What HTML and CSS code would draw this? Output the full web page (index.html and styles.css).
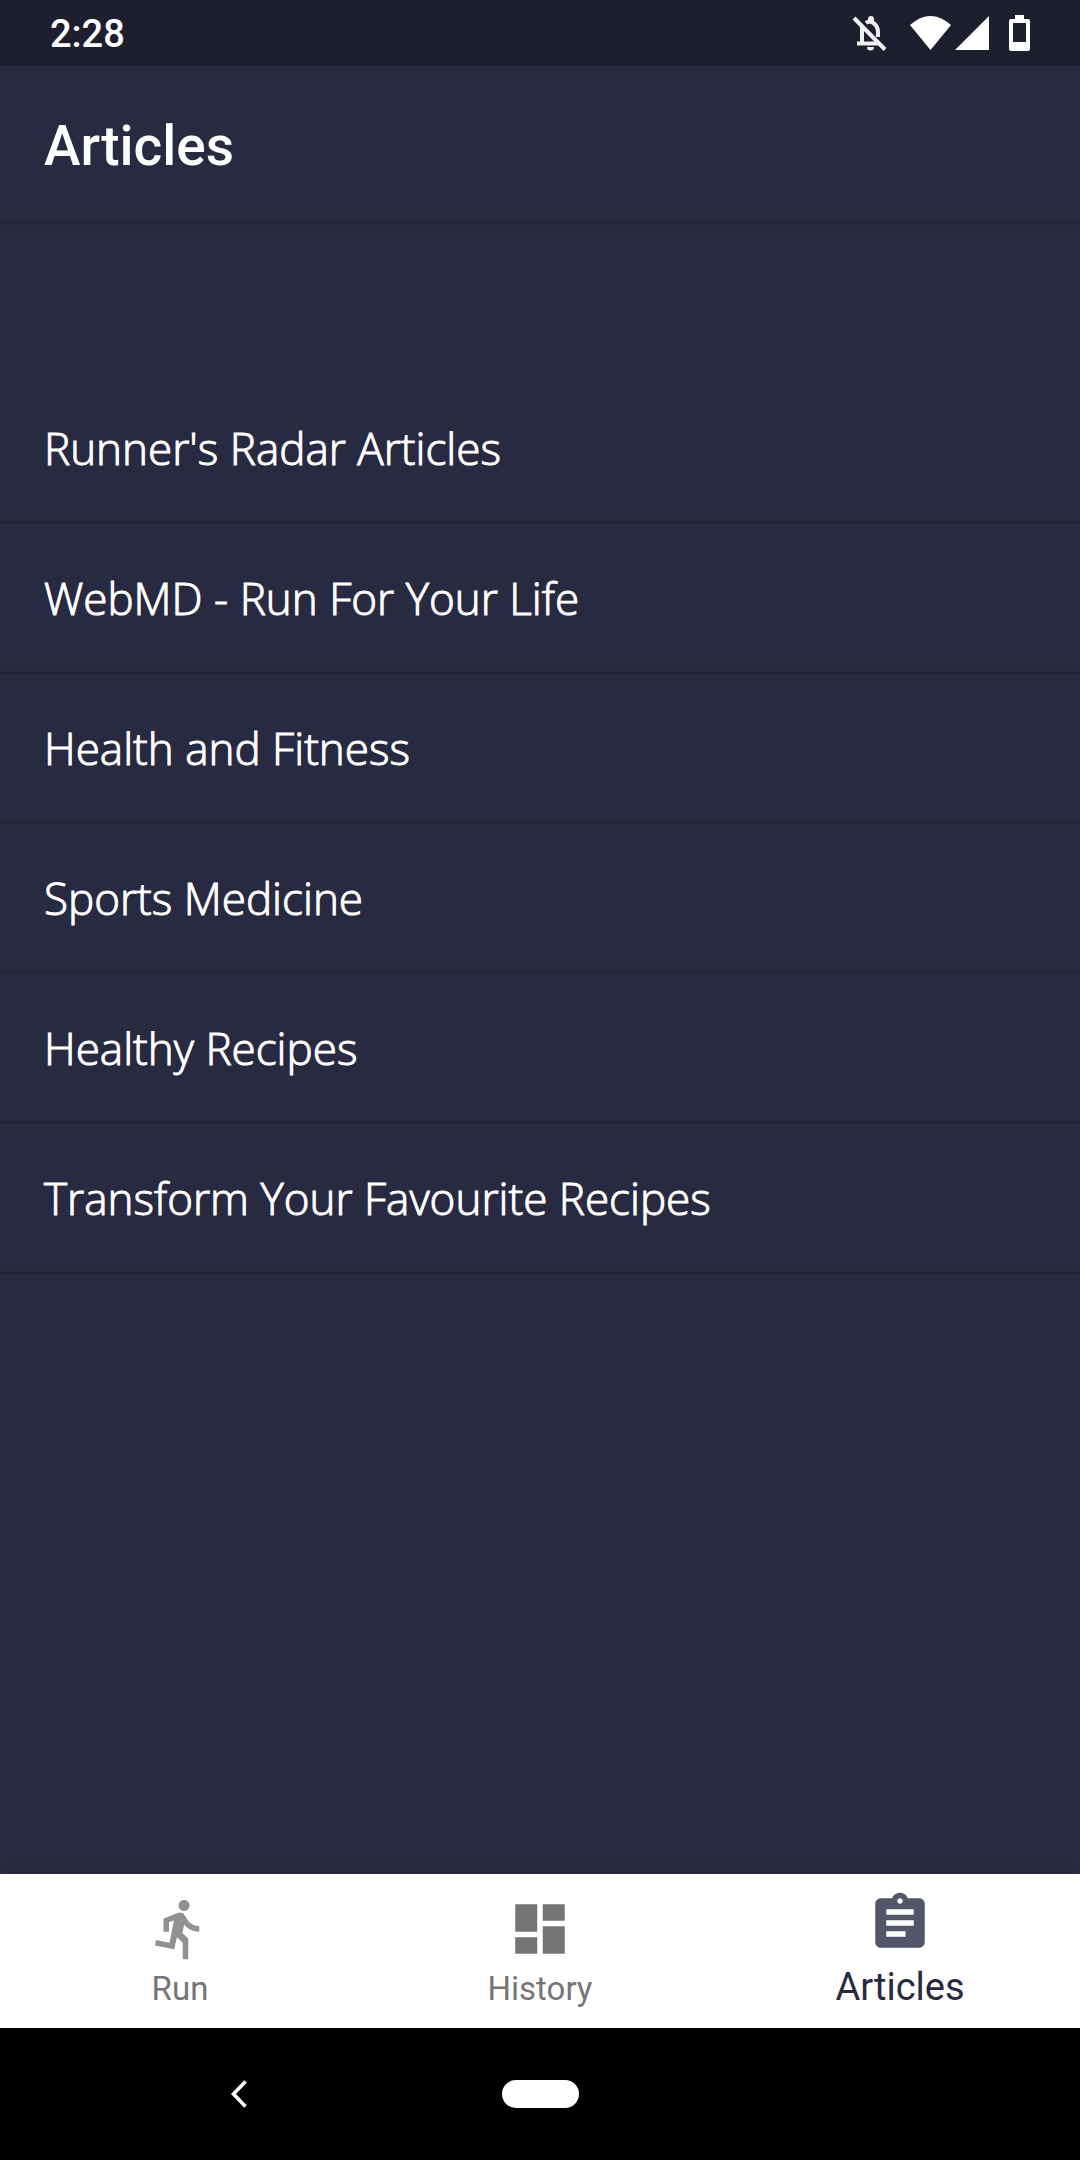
FILE: index.html
```html
<!DOCTYPE html>
<html lang="en">
<head>
<meta charset="utf-8">
<meta name="viewport" content="width=device-width, initial-scale=1">
<title>Articles</title>
<link rel="stylesheet" href="styles.css">
</head>
<body>
<div class="status">
  <time class="clock">2:28</time>
  <div class="indicators">
    <svg class="bell" viewBox="0 0 38 38" aria-hidden="true">
      <g fill="none" stroke="#f0f0f2" stroke-width="4">
        <path d="M12 13V29M7 29.500H28M16 9C21 5 28 11 28 18V23"/>
        <path d="M4 4L35 35.500"/>
      </g>
      <path d="M18 7V5a3 3 0 0 1 6 0v3zM17 33h7a3.500 3.500 0 0 1-7 0z" fill="#f0f0f2"/>
    </svg>
    <svg class="wifi" viewBox="0 0 41 34" aria-hidden="true"><path d="M0 9Q20.500-9 41 9L20.500 34z" fill="#fff"/></svg>
    <svg class="signal" viewBox="0 0 34 34" aria-hidden="true"><path d="M34 0V34H0z" fill="#fff"/></svg>
    <svg class="battery" viewBox="0 0 21 36" aria-hidden="true"><path fill="#fff" fill-rule="evenodd" d="M6 0h9v4h4a2 2 0 0 1 2 2v28a2 2 0 0 1-2 2H2a2 2 0 0 1-2-2V6a2 2 0 0 1 2-2h4zM4 8v19h13V8z"/></svg>
  </div>
</div>
<header class="appbar"><h1>Articles</h1></header>
<main class="content">
  <ul class="list">
    <li><a href="#radar">Runner's Radar Articles</a></li>
    <li><a href="#webmd">WebMD - Run For Your Life</a></li>
    <li><a href="#fitness">Health and Fitness</a></li>
    <li><a href="#medicine">Sports Medicine</a></li>
    <li><a href="#recipes">Healthy Recipes</a></li>
    <li><a href="#transform">Transform Your Favourite Recipes</a></li>
  </ul>
</main>
<nav class="tabs">
  <a class="tab tab-run" href="#run">
    <svg viewBox="0 0 24 24" aria-hidden="true"><path d="M13.490 5.480c1.100 0 2-.9 2-2s-.9-2-2-2-2 .9-2 2 .9 2 2 2zm-3.600 13.900l1-4.400 2.100 2v6h2v-7.500l-2.100-2 .6-3c1.300 1.500 3.300 2.500 5.500 2.500v-2c-1.900 0-3.500-1-4.300-2.400l-1-1.600c-.4-.6-1-1-1.700-1-.3 0-.5.100-.8.100l-5.200 2.200v4.700h2v-3.400l1.800-.7-1.600 8.100-4.900-1-.4 2 7 1.400z"/></svg>
    <span>Run</span>
  </a>
  <a class="tab" href="#history">
    <svg viewBox="0 0 24 24" aria-hidden="true"><path d="M3 13h8V3H3v10zm0 8h8v-6H3v6zm10 0h8V11h-8v10zm0-18v6h8V3h-8z"/></svg>
    <span>History</span>
  </a>
  <a class="tab tab-active" href="#articles" aria-current="page">
    <svg viewBox="0 0 24 24" aria-hidden="true"><path d="M19 3h-4.180C14.400 1.840 13.300 1 12 1c-1.300 0-2.400.84-2.820 2H5c-1.100 0-2 .9-2 2v14c0 1.100.9 2 2 2h14c1.100 0 2-.9 2-2V5c0-1.100-.9-2-2-2zm-7 0c.55 0 1 .45 1 1s-.45 1-1 1-1-.45-1-1 .45-1 1-1zm2 14H7v-2h7v2zm3-4H7v-2h10v2zm0-4H7V7h10v2z"/></svg>
    <span>Articles</span>
  </a>
</nav>
<div class="system">
  <button class="back" type="button" aria-label="Back"><svg viewBox="0 0 16 28" aria-hidden="true"><path d="M14.500 1.500L2.500 14l12 12.500" fill="none" stroke="#fff" stroke-width="3.600"/></svg></button>
  <button class="home" type="button" aria-label="Home"></button>
</div>
</body>
</html>
```
FILE: styles.css
```css
* { box-sizing: border-box; }

body {
  margin: 0;
  min-height: 100vh;
  display: flex;
  flex-direction: column;
  background: #282a41;
  color: #fff;
  font-family: Roboto, "Liberation Sans", sans-serif;
}

a { color: inherit; text-decoration: none; }
svg { display: block; }

.status {
  height: 66px;
  padding: 0 50px;
  display: flex;
  align-items: center;
  justify-content: space-between;
  background: #1d1f2f;
}
.clock { padding-top: 2px; font-size: 38px; font-weight: 500; }
.indicators { display: flex; align-items: center; }
.bell { width: 38px; height: 38px; margin-right: 22px; }
.wifi { width: 41px; height: 34px; margin-right: 4px; }
.signal { width: 34px; height: 34px; margin-right: 20px; }
.battery { width: 21px; height: 36px; }

.appbar {
  height: 154px;
  padding: 6px 44px 0;
  display: flex;
  align-items: center;
  box-shadow: 0 2px 10px rgba(0, 0, 0, .12);
}
.appbar h1 { margin: 0; font-size: 55px; font-weight: 500; line-height: 64px; }

.content { flex: 1; padding-top: 154px; }
.list { margin: 0; padding: 0; list-style: none; }
.list a {
  height: 150px;
  padding: 0 44px;
  display: flex;
  align-items: center;
  border-bottom: 3px solid #232538;
  font-family: "Open Sans", "Noto Sans", sans-serif;
  font-size: 44px;
  font-weight: 300;
  -webkit-text-stroke: 1px currentColor;
}

.tabs {
  height: 154px;
  display: grid;
  grid-template-columns: repeat(3, 1fr);
  background: #fff;
  box-shadow: 0 -2px 10px rgba(0, 0, 0, .12);
}
.tab {
  padding-top: 22px;
  display: flex;
  flex-direction: column;
  align-items: center;
  gap: 3px;
  color: #757575;
  font-size: 33px;
  line-height: 48px;
}
.tab svg { width: 66px; height: 66px; fill: currentColor; }
.tab-run svg { fill: #919191; }
.tab-active { padding-top: 16px; gap: 7px; color: #282a41; font-size: 38px; }
.tab-active svg { fill: #535568; }

.system {
  height: 132px;
  display: grid;
  grid-template-columns: 1fr 77px 1fr;
  align-items: center;
  background: #000;
}
.system button { padding: 0; border: 0; background: none; }
.system .back { justify-self: center; margin-right: 24px; }
.back svg { width: 16px; height: 28px; }
.system .home { grid-column: 2; height: 28px; border-radius: 14px; background: #fff; }
```
